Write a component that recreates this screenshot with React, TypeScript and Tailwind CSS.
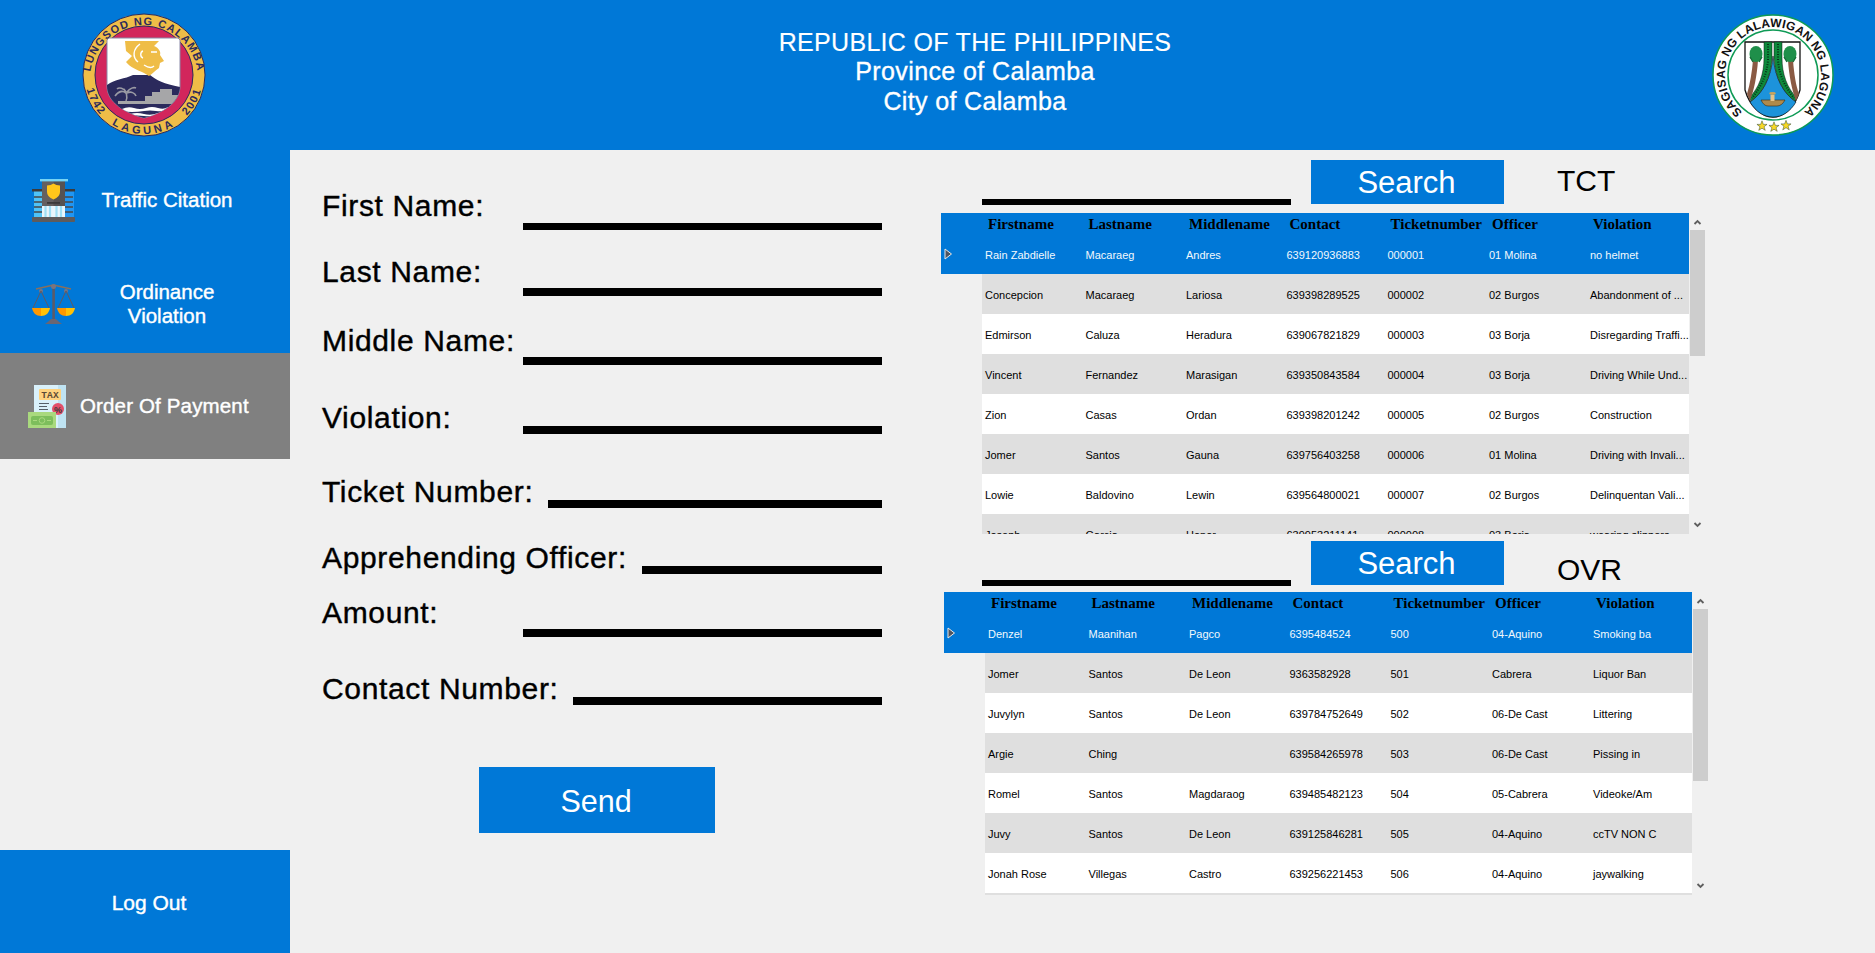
import React from 'react';

const tctRows: string[][] = [
  ['Rain Zabdielle', 'Macaraeg', 'Andres', '639120936883', '000001', '01 Molina', 'no helmet'],
  ['Concepcion', 'Macaraeg', 'Lariosa', '639398289525', '000002', '02 Burgos', 'Abandonment of ...'],
  ['Edmirson', 'Caluza', 'Heradura', '639067821829', '000003', '03 Borja', 'Disregarding Traffi...'],
  ['Vincent', 'Fernandez', 'Marasigan', '639350843584', '000004', '03 Borja', 'Driving While Und...'],
  ['Zion', 'Casas', 'Ordan', '639398201242', '000005', '02 Burgos', 'Construction'],
  ['Jomer', 'Santos', 'Gauna', '639756403258', '000006', '01 Molina', 'Driving with Invali...'],
  ['Lowie', 'Baldovino', 'Lewin', '639564800021', '000007', '02 Burgos', 'Delinquentan Vali...'],
  ['Joseph', 'Garcia', 'Honor', '639953211141', '000008', '03 Borja', 'wearing slippers'],
];

const ovrRows: string[][] = [
  ['Denzel', 'Maanihan', 'Pagco', '6395484524', '500', '04-Aquino', 'Smoking ba'],
  ['Jomer', 'Santos', 'De Leon', '9363582928', '501', 'Cabrera', 'Liquor Ban'],
  ['Juvylyn', 'Santos', 'De Leon', '639784752649', '502', '06-De Cast', 'Littering'],
  ['Argie', 'Ching', '', '639584265978', '503', '06-De Cast', 'Pissing in'],
  ['Romel', 'Santos', 'Magdaraog', '639485482123', '504', '05-Cabrera', 'Videoke/Am'],
  ['Juvy', 'Santos', 'De Leon', '639125846281', '505', '04-Aquino', 'ccTV NON C'],
  ['Jonah Rose', 'Villegas', 'Castro', '639256221453', '506', '04-Aquino', 'jaywalking'],
  ['', '', '', '', '', '', ''],
];

const columns = [
  { name: 'Firstname', width: 'w-[100.5px]' },
  { name: 'Lastname', width: 'w-[100.5px]' },
  { name: 'Middlename', width: 'w-[100.5px]' },
  { name: 'Contact', width: 'w-[101px]' },
  { name: 'Ticketnumber', width: 'w-[101.5px]' },
  { name: 'Officer', width: 'w-[101px]' },
  { name: 'Violation', width: '' },
];

const fields = [
  { label: 'First Name:', row: 'h-[80px]', labelBox: 'mb-[9px]', line: 'w-[359px] h-[7px]' },
  { label: 'Last Name:', row: 'h-[66px]', labelBox: 'mb-[9px]', line: 'w-[359px] h-[8px]' },
  { label: 'Middle Name:', row: 'h-[69px]', labelBox: 'mb-[9px]', line: 'w-[359px] h-[8px]' },
  { label: 'Violation:', row: 'h-[69px]', labelBox: 'mb-[1px]', line: 'w-[359px] h-[8px]' },
  { label: 'Ticket Number:', row: 'h-[74px]', labelBox: 'mb-[1px]', line: 'w-[334px] h-[8px]' },
  { label: 'Apprehending Officer:', row: 'h-[66px]', labelBox: 'mb-[1px]', line: 'w-[240px] h-[8px]' },
  { label: 'Amount:', row: 'h-[63px]', labelBox: 'mb-[9px]', line: 'w-[359px] h-[8px]' },
  { label: 'Contact Number:', row: 'h-[68px]', labelBox: 'mb-[1px]', line: 'w-[309px] h-[8px]' },
];

const CalambaSeal = () => (
  <svg width="124" height="124" viewBox="0 0 124 124">
    <circle cx="62" cy="62" r="61" fill="#EFBD47" stroke="#2B2A5C" strokeWidth="1" />
    <circle cx="62" cy="62" r="49" fill="#D2265C" stroke="#2B2A5C" strokeWidth="1" />
    <defs>
      <path id="calambaTop" d="M 8 68 A 54 54 0 0 1 116 68" transform="translate(0 -2)" />
      <path id="calambaBottom" d="M 3 62 A 59 59 0 0 0 121 62" />
      <clipPath id="calambaShield">
        <path d="M25 27 L27 25 H96 L98 27 V73 C98 90 80 100 62 105 C44 100 25 90 25 73 Z" />
      </clipPath>
    </defs>
    <g fontFamily="Liberation Sans, sans-serif" fontWeight="700" fill="#2B2A5C" fontSize="11">
      <text textAnchor="middle" letterSpacing="1.2">
        <textPath href="#calambaTop" startOffset="50%">LUNGSOD NG CALAMBA</textPath>
      </text>
      <text textAnchor="middle" letterSpacing="3.5">
        <textPath href="#calambaBottom" startOffset="50%">LAGUNA</textPath>
      </text>
      <text textAnchor="middle" letterSpacing="1.5">
        <textPath href="#calambaBottom" startOffset="16%">1742</textPath>
      </text>
      <text textAnchor="middle" letterSpacing="1.5">
        <textPath href="#calambaBottom" startOffset="84%">2001</textPath>
      </text>
    </g>
    <path d="M25 27 L27 25 H96 L98 27 V73 C98 90 80 100 62 105 C44 100 25 90 25 73 Z" fill="#fff" stroke="#8a8aa8" strokeWidth="1" />
    <g clipPath="url(#calambaShield)">
      <path d="M25 72 C33 66 43 66 51 62 L68 62 C74 67 82 71 98 74 V110 H25 Z" fill="#2B2A5C" />
      <path d="M36 91 H98 V82 H90 V76 H78 V79 H70 V83 H63 V88 H36 Z" fill="#A6A6A8" />
      <path d="M30 93 H98 V97 H30 Z" fill="#2B2A5C" />
      <path d="M40 96 Q46 93 52 95 T64 95 T76 95 T86 94 V97 Q80 99 74 98 T62 98 T50 99 T40 98 Z" fill="#fff" />
      <path d="M48 101 Q55 99 62 101 T76 100 V102 Q69 104 62 103 T48 103 Z" fill="#fff" />
    </g>
    <path d="M44 88 C46 84 44 78 42 76 M44 80 C40 77 36 79 33 83 M44 79 C42 75 37 74 35 76 M45 79 C48 75 52 74 54 75 M45 80 C49 78 53 80 54 83" stroke="#9a9aa4" strokeWidth="1.6" fill="none" />
    <path d="M43 28 H77 L72 33 C77 35 79 39 78 42 L82 48 L78 50 L77 55 C73 58 71 60 67 63 L62 60 C55 57 48 54 44 49 L50 43 L44 38 Z" fill="#EFBD47" />
    <path d="M58 31 C51 36 50 44 56 49 M61 38 C58 39 58 44 61 45 M62 52 C65 54 69 56 72 53 M69 39 H75" stroke="#fff" strokeWidth="1.4" fill="none" />
  </svg>
);

const Star = ({ x, y }: { x: number; y: number }) => (
  <polygon
    transform={`translate(${x} ${y}) scale(1.15)`}
    points="0,-4.5 1.2,-1.4 4.4,-1.4 1.8,0.6 2.8,3.8 0,1.9 -2.8,3.8 -1.8,0.6 -4.4,-1.4 -1.2,-1.4"
    fill="#F7D826"
    stroke="#1d3a20"
    strokeWidth="0.4"
  />
);

const LagunaSeal = () => (
  <svg width="122" height="122" viewBox="0 0 122 122">
    <circle cx="61" cy="61" r="60" fill="#fff" stroke="#0E9A55" strokeWidth="1.5" />
    <circle cx="61" cy="61" r="45" fill="#fff" stroke="#0E9A55" strokeWidth="1.5" />
    <defs>
      <path id="lagunaArc" d="M 37 102.6 A 48 48 0 1 1 85 102.6" />
    </defs>
    <text fontFamily="Liberation Sans, sans-serif" fontWeight="700" fontSize="12" fill="#111" textAnchor="middle" letterSpacing="0.2">
      <textPath href="#lagunaArc" startOffset="50%">SAGISAG NG LALAWIGAN NG LAGUNA</textPath>
    </text>
    <Star x={50} y={112} />
    <Star x={62} y={113} />
    <Star x={74} y={111.5} />
    <path d="M33 28 H88 V76 C84 90 74 103 61 103 C48 103 37 90 33 76 Z" fill="#fff" stroke="#111" strokeWidth="1.3" />
    <path d="M61 42 C59 65 50 80 38 88 C44 98 52 103 61 103 C70 103 78 98 84 88 C72 80 63 65 61 42 Z" fill="#1D93DB" stroke="#111" strokeWidth="0.6" />
    <path d="M52 28 H60 V44 C59 64 50 80 39 87 L37 84 C47 74 52 60 52 44 Z" fill="#0E8A3C" stroke="#111" strokeWidth="0.5" />
    <path d="M62 28 H70 V44 C70 60 75 74 85 84 L83 87 C72 80 63 64 62 44 Z" fill="#0E8A3C" stroke="#111" strokeWidth="0.5" />
    <path d="M56 30 V46 C55 62 48 74 40 84 M66 30 V46 C67 62 74 74 82 84" stroke="#08331a" strokeWidth="2" strokeDasharray="1 1.5" fill="none" />
    <path d="M41 46 H46 C45 62 42 76 38 87 L35 80 C38 70 40 58 41 46 Z" fill="#8A5A44" />
    <path d="M76 46 H81 C82 60 84 72 87 80 L84 87 C80 76 77 62 76 46 Z" fill="#8A5A44" />
    <ellipse cx="44" cy="40" rx="6.5" ry="8" fill="#1F8F4A" />
    <ellipse cx="78" cy="40" rx="6.5" ry="8" fill="#1F8F4A" />
    <path d="M38 43 L41 48 M50 43 L47 48 M72 43 L75 48 M84 43 L81 48" stroke="#146b36" strokeWidth="1.4" />
    <path d="M49 86 H73 C71 90 68 92 65 92 H56 C53 92 51 90 49 86 Z" fill="#B08A4A" stroke="#3a2a10" strokeWidth="0.6" />
    <rect x="58.5" y="81" width="4" height="6" fill="#E4C48A" />
    <ellipse cx="60.5" cy="79.5" rx="3.2" ry="1.4" fill="#C9A45C" />
  </svg>
);

const BuildingIcon = () => (
  <svg width="43" height="43" viewBox="0 0 43 43">
    <rect x="2" y="11" width="40" height="28" fill="#4FC3F7" />
    <rect x="33" y="11" width="9" height="28" fill="#2196F3" />
    <rect x="0" y="10" width="43" height="2.5" fill="#3C3A3A" />
    <path d="M2 18 H10 M2 23 H10 M2 28 H10 M2 33 H10 M33 18 H41 M33 23 H41 M33 28 H41 M33 33 H41" stroke="#4a4848" strokeWidth="1.4" />
    <rect x="10" y="2" width="23" height="36" fill="#646060" />
    <rect x="21.5" y="2" width="11.5" height="36" fill="#565252" />
    <rect x="8" y="0" width="28" height="2.4" fill="#77D4F4" />
    <path d="M15 6.5 Q19 6.5 21.5 4.5 Q24 6.5 28 6.5 V13 Q28 18 21.5 20.5 Q15 18 15 13 Z" fill="#FFC61B" />
    <rect x="15" y="23" width="13" height="1.8" fill="#3C3A3A" />
    <rect x="10" y="27" width="23" height="12" fill="#EAF6FB" />
    <path d="M13.5 27 V39 M18 27 V39 M24.5 27 V39 M29 27 V39" stroke="#9EE0F5" strokeWidth="2.2" />
    <rect x="0" y="38" width="43" height="5" rx="1" fill="#5F5B5B" />
  </svg>
);

const ScalesIcon = () => (
  <svg width="43" height="41" viewBox="0 0 43 41">
    <path d="M4 5 L21.5 1 L39 5" stroke="#8B6F5A" strokeWidth="1.4" fill="none" />
    <rect x="20.3" y="3" width="2.6" height="32" fill="#5D5A66" />
    <circle cx="21.5" cy="2.5" r="2.5" fill="#7A7480" />
    <path d="M17 37 L19 35 H24 L26 37 L30 40 H13 Z" fill="#6A6672" />
    <circle cx="9" cy="7" r="2" fill="#7A7480" />
    <circle cx="34" cy="7" r="2" fill="#7A7480" />
    <path d="M9 7 L1 24 M9 7 L17 24 M34 7 L26 24 M34 7 L42 24" stroke="#5D5A66" strokeWidth="1" fill="none" />
    <path d="M0 24 H9 V32 C4 32 1 29 0 24 Z" fill="#FF9800" />
    <path d="M9 24 H18 C17 29 14 32 9 32 Z" fill="#FFC107" />
    <path d="M25 24 H34 V32 C29 32 26 29 25 24 Z" fill="#FF9800" />
    <path d="M34 24 H43 C42 29 39 32 34 32 Z" fill="#FFC107" />
  </svg>
);

const TaxIcon = () => (
  <svg width="39" height="43" viewBox="0 0 39 43">
    <rect x="6" y="0" width="32" height="43" fill="#D9F1FB" />
    <rect x="30" y="0" width="8" height="43" fill="#BFE3F2" />
    <rect x="11" y="4" width="22" height="11" rx="1" fill="#FFD27F" />
    <text x="22" y="12.5" textAnchor="middle" fontFamily="Liberation Mono, monospace" fontWeight="700" fontSize="9.5" fill="#5C4A36">TAX</text>
    <path d="M11 18.5 H21 M11 21.5 H19 M11 24.5 H20" stroke="#55606a" strokeWidth="1.2" />
    <circle cx="30" cy="24" r="6" fill="#E3506A" />
    <text x="30" y="27.5" textAnchor="middle" fontFamily="Liberation Sans, sans-serif" fontWeight="700" fontSize="9" fill="#3C3A3A">%</text>
    <rect x="0" y="27" width="28" height="16" fill="#A9D97E" />
    <rect x="3" y="31" width="22" height="9" rx="2" fill="#7DBE5C" />
    <circle cx="14" cy="35.5" r="2.8" fill="none" stroke="#A9D97E" strokeWidth="1" />
    <path d="M5 35.5 H9 M19 35.5 H23" stroke="#A9D97E" strokeWidth="1" />
  </svg>
);

const RowArrow = () => (
  <svg width="9" height="12" viewBox="0 0 9 12" className="ml-[3px] block">
    <path d="M1 1 L7.5 6 L1 11 Z" fill="#4f5560" stroke="#e8e8e8" strokeWidth="1" />
  </svg>
);

const Chevron = ({ up }: { up?: boolean }) => (
  <svg width="15" height="8" viewBox="0 0 15 8" className="block">
    <path d={up ? 'M4.5 6 L7.5 3 L10.5 6' : 'M4.5 2 L7.5 5 L10.5 2'} stroke="#5f5f5f" strokeWidth="1.8" fill="none" />
  </svg>
);

interface GridProps {
  rows: string[][];
  boxClass: string;
  thumbClass: string;
}

const DataGrid: React.FC<GridProps> = ({ rows, boxClass, thumbClass }) => (
  <div className={`flex ${boxClass}`}>
    <div className="h-full w-[748px] overflow-hidden">
      <table className="w-[748px] table-fixed border-collapse">
        <colgroup>
          <col className="w-[41px]" />
          {columns.map((c) => (
            <col key={c.name} className={c.width} />
          ))}
        </colgroup>
        <thead>
          <tr className="h-[21px] bg-[#0078D7]">
            <th />
            {columns.map((c) => (
              <th
                key={c.name}
                className="pt-[1px] pl-[6px] text-left font-['Liberation_Serif',serif] text-[15px] leading-[20px] font-bold whitespace-nowrap text-black"
              >
                {c.name}
              </th>
            ))}
          </tr>
        </thead>
        <tbody>
          {rows.map((row, i) => {
            const selected = i === 0;
            const rowClass = selected ? 'bg-[#0078D7] text-[#f2f8fd]' : i % 2 === 1 ? 'bg-[#DFDFDF] text-black' : 'bg-white text-black';
            return (
              <tr key={i} className="h-[40px]">
                <td className={selected ? 'bg-[#0078D7] p-0' : 'p-0'}>{selected && <RowArrow />}</td>
                {row.map((cell, j) => (
                  <td key={j} className={`${rowClass} overflow-hidden pt-[2px] pl-[3px] text-[11px] whitespace-nowrap`}>
                    {cell}
                  </td>
                ))}
              </tr>
            );
          })}
        </tbody>
      </table>
    </div>
    <div className="ml-px flex h-full w-[15px] flex-col">
      <div className="pt-[5px]">
        <Chevron up />
      </div>
      <div className={`bg-[#CDCDCD] ${thumbClass}`} />
      <div className="mt-auto pb-[5px]">
        <Chevron />
      </div>
    </div>
  </div>
);

const SearchBar = ({ label, labelClass }: { label: string; labelClass: string }) => (
  <div className="flex h-[45px] pl-[41px]">
    <div className="h-[6px] w-[309px] self-end bg-black" />
    <button className="ml-[20px] h-[44px] w-[193px] bg-[#0078D7] pt-[1px] pr-[2px] text-[31px] leading-none text-white">Search</button>
    <span className={`ml-[53px] text-[30px] leading-none text-black ${labelClass}`}>{label}</span>
  </div>
);

export default function App() {
  return (
    <div className="flex h-[953px] w-[1875px] flex-col overflow-hidden bg-[#F0F0F0] font-['Liberation_Sans',Arial,sans-serif]">
      <header className="flex h-[150px] shrink-0 items-center bg-[#0078D7] pr-[41px] pl-[82px] text-white">
        <CalambaSeal />
        <div className="flex-1 pb-[6px] pl-[32px] text-center text-[25px] leading-[29.5px]">
          <div className="tracking-[0.3px] [-webkit-text-stroke:0.15px_white]">REPUBLIC OF THE PHILIPPINES</div>
          <div className="tracking-[0.4px] [-webkit-text-stroke:0.35px_white]">Province of Calamba</div>
          <div className="tracking-[0.35px] [-webkit-text-stroke:0.35px_white]">City of Calamba</div>
        </div>
        <LagunaSeal />
      </header>

      <div className="flex flex-1">
        <aside className="flex w-[290px] shrink-0 flex-col">
          <div className="bg-[#0078D7] text-[20.5px] leading-[24px] text-white [-webkit-text-stroke:0.4px_white]">
            <div className="flex h-[101px] items-center pl-[32px]">
              <BuildingIcon />
              <span className="mb-[1px] w-[184px] text-center">Traffic Citation</span>
            </div>
            <div className="flex h-[102px] items-center pt-[4px] pl-[32px]">
              <ScalesIcon />
              <span className="w-[184px] text-center">
                Ordinance
                <br />
                Violation
              </span>
            </div>
          </div>
          <div className="flex h-[106px] items-center bg-[#808080] pl-[28px] text-[20.5px] tracking-[0.15px] text-white [-webkit-text-stroke:0.4px_white]">
            <TaxIcon />
            <span className="ml-[13px] whitespace-nowrap">Order Of Payment</span>
          </div>
          <div className="mt-auto flex h-[103px] items-center justify-center bg-[#0078D7] pt-[2px] pl-[8px] text-[21px] text-white [-webkit-text-stroke:0.4px_white]">
            <span className="whitespace-nowrap">Log Out</span>
          </div>
        </aside>

        <main className="flex flex-1">
          <section className="w-[651px] shrink-0 pl-[32px]">
            {fields.map((f) => (
              <div key={f.label} className={`flex w-[560px] items-end ${f.row}`}>
                <span className={`text-[30px] leading-none tracking-[0.65px] whitespace-nowrap text-black [-webkit-text-stroke:0.4px_black] ${f.labelBox}`}>
                  {f.label}
                </span>
                <div className={`ml-auto bg-black ${f.line}`} />
              </div>
            ))}
            <button className="mt-[62px] ml-[157px] block h-[66px] w-[236px] bg-[#0078D7] pt-[3px] pr-[2px] text-[30.5px] leading-none text-white">Send</button>
          </section>

          <section className="flex-1 pt-[10px]">
            <SearchBar label="TCT" labelClass="mt-[6px]" />
            <div className="mt-[8px]">
              <DataGrid rows={tctRows} boxClass="h-[321px]" thumbClass="mt-[4px] h-[126px]" />
            </div>
            <div className="mt-[7px]">
              <SearchBar label="OVR" labelClass="mt-[14px]" />
            </div>
            <div className="mt-[6px] ml-[3px]">
              <DataGrid rows={ovrRows} boxClass="h-[303px]" thumbClass="mt-[4px] h-[172px]" />
            </div>
          </section>
        </main>
      </div>
    </div>
  );
}
